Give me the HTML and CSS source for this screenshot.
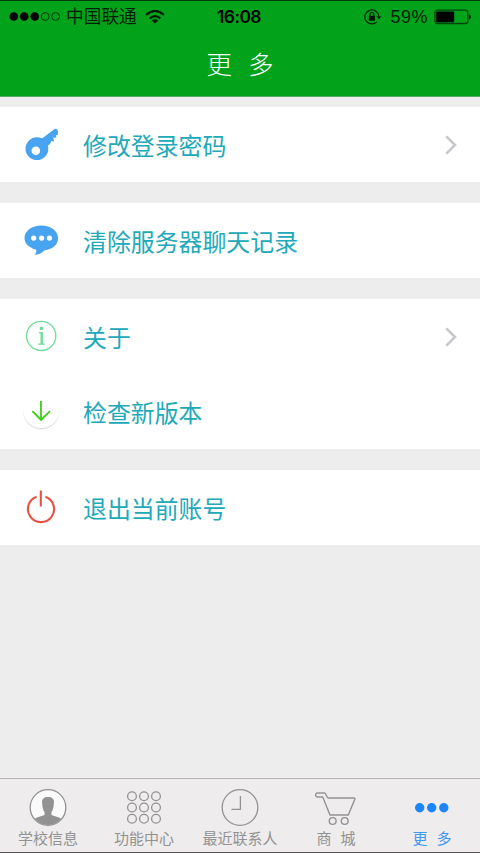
FILE: index.html
```html
<!DOCTYPE html>
<html lang="zh-CN">
<head>
<meta charset="utf-8">
<title>更多</title>
<link rel="stylesheet" href="styles.css">
</head>
<body>
<div class="screen">
  <header class="header">
    <div class="status">
      <div class="status-left">
        <svg class="signal" width="52" height="10" viewBox="0 0 52 10"><g fill="#000"><circle cx="4.8" cy="4.5" r="4.3"/><circle cx="15.2" cy="4.5" r="4.3"/><circle cx="25.7" cy="4.5" r="4.3"/></g><g fill="none" stroke="#003c06" stroke-width="1"><circle cx="36.2" cy="4.5" r="3.9"/><circle cx="46.6" cy="4.5" r="3.9"/></g></svg>
        <span class="carrier">中国联通</span>
        <svg class="wifi" width="20" height="14" viewBox="0 0 20 14"><g fill="none" stroke="#001a03" stroke-width="2.2"><path d="M1 4.9Q10 -3.1 19 4.9"/><path d="M4.7 8.3Q10 3.8 15.3 8.3"/></g><path d="M10 13.5L6.8 10.5Q10 8 13.2 10.5Z" fill="#001a03"/></svg>
      </div>
      <span class="time">16:08</span>
      <div class="status-right">
        <svg width="18" height="16" viewBox="0 0 18 16"><path d="M14.8 7.3A7 7 0 1 0 12.7 13" fill="none" stroke="#002b05" stroke-width="1.3"/><path d="M12.4 7.2H17.5L15 10.2Z" fill="#002b05"/><rect x="4.8" y="6.8" width="6.2" height="4.9" fill="#001503"/><path d="M6 7V5.4a1.9 1.9 0 0 1 3.8 0V7" fill="none" stroke="#001503" stroke-width="1.2"/></svg>
        <span class="percent">59%</span>
        <svg width="37" height="16" viewBox="0 0 37 16"><rect x=".9" y="1.1" width="33" height="13.4" rx="2.6" fill="none" stroke="#004508" stroke-width="1.3"/><rect x="2.2" y="2.4" width="18" height="10.8" rx="1" fill="#000"/><path d="M35 5.3Q37 5.8 37 7.9T35 10.5Z" fill="#002b05"/></svg>
      </div>
    </div>
    <h1 class="title">更<span class="gap"></span>多</h1>
  </header>

  <main class="content">
    <section class="group">
      <div class="row">
        <svg class="icon" viewBox="0.6 -0.7 40 40"><g fill="#48a4f0"><circle cx="16.5" cy="23" r="11.4"/><path d="M20 14L34.2 3.2Q37 2.5 37.6 5.5L37.5 9 35.7 9.5 35.8 12 33 11.8 33.6 16 30.8 15.4 29.6 18.5 25 21Z"/></g><circle cx="15.4" cy="25" r="4.3" fill="#fff"/></svg>
        <span class="label">修改登录密码</span>
        <svg class="chevron" viewBox="0 0 12 20"><path d="M1.3 1.3L10 10 1.3 18.7"/></svg>
      </div>
    </section>
    <section class="group">
      <div class="row">
        <svg class="icon" viewBox="0 0 40 40"><path d="M20.3 4.5C11 4.5 3.5 9.9 3.5 17C3.5 22.6 8 26.7 15.2 28.8C15.6 31 14.8 32.3 13.6 33.8C18 33.8 21.3 32 23.6 29.3C31.8 28.4 37.1 23.2 37.1 17C37.1 9.9 29.6 4.5 20.3 4.5Z" fill="#48a4f0"/><g fill="#fff"><circle cx="12.7" cy="17.1" r="2.6"/><circle cx="20.6" cy="17.1" r="2.6"/><circle cx="28.4" cy="17.1" r="2.6"/></g></svg>
        <span class="label">清除服务器聊天记录</span>
      </div>
    </section>
    <section class="group">
      <div class="row">
        <svg class="icon" viewBox="0 0 40 40"><circle cx="20.2" cy="18.9" r="14.6" fill="none" stroke="#6fdc9c" stroke-width="1.3"/><circle cx="20.4" cy="11.4" r="1.8" fill="#6fdc9c"/><path d="M17.8 15.6H20.7V27.1M17.3 27.1H24" fill="none" stroke="#6fdc9c" stroke-width="1.2"/><path d="M20.7 15.3V27" stroke="#6fdc9c" stroke-width="2.4"/></svg>
        <span class="label">关于</span>
        <svg class="chevron" viewBox="0 0 12 20"><path d="M1.3 1.3L10 10 1.3 18.7"/></svg>
      </div>
      <div class="row">
        <svg class="icon" viewBox="0 0 40 40"><defs><linearGradient id="rim" x2="0" y2="1"><stop offset=".3" stop-color="#fafafa"/><stop offset="1" stop-color="#dedede"/></linearGradient></defs><circle cx="20.3" cy="19" r="18.4" fill="url(#rim)"/><circle cx="20.3" cy="18" r="18" fill="#fff"/><path d="M20 9V28.5M11.4 19.2L20 28 29 19.2" fill="none" stroke="#39d010" stroke-width="1.8"/></svg>
        <span class="label">检查新版本</span>
      </div>
    </section>
    <section class="group">
      <div class="row">
        <svg class="icon" viewBox="0 -2.2 40 40"><path d="M15.6 6.5A13.1 13.1 0 1 0 24.4 6.5M19.8 0.2V16.2" fill="none" stroke="#e94f43" stroke-width="2.1"/></svg>
        <span class="label">退出当前账号</span>
      </div>
    </section>
  </main>

  <nav class="tabs">
    <div class="tab">
      <svg class="tab-icon" viewBox="0 0 42 40"><defs><clipPath id="face"><circle cx="21" cy="20.5" r="17.5"/></clipPath></defs><circle cx="21" cy="20.5" r="17.8" fill="#fafafa" stroke="#929292" stroke-width="1.3"/><g clip-path="url(#face)" fill="#929292"><path d="M15 15C15 12 17 10 21 10S27 12 27 15L26.5 20Q26 23 24.5 25V28C28 29.4 33 30 36 33V40H6V33C9 30 14 29.4 17.5 28V25Q16 23 15.5 20Z"/></g></svg>
      <span>学校信息</span>
    </div>
    <div class="tab">
      <svg class="tab-icon" viewBox="0 0 42 40"><g fill="none" stroke="#929292" stroke-width="1.3"><circle cx="9" cy="9.2" r="4.4"/><circle cx="21" cy="9.2" r="4.4"/><circle cx="33" cy="9.2" r="4.4"/><circle cx="9" cy="20.5" r="4.4"/><circle cx="21" cy="20.5" r="4.4"/><circle cx="33" cy="20.5" r="4.4"/><circle cx="9" cy="31.8" r="4.4"/><circle cx="21" cy="31.8" r="4.4"/><circle cx="33" cy="31.8" r="4.4"/></g></svg>
      <span>功能中心</span>
    </div>
    <div class="tab">
      <svg class="tab-icon" viewBox="0 0 42 40"><g fill="none" stroke="#929292" stroke-width="1.3"><circle cx="21" cy="20.5" r="17.8"/><path d="M21.4 9V22.3H12.5"/></g></svg>
      <span>最近联系人</span>
    </div>
    <div class="tab">
      <svg class="tab-icon" viewBox="0 0 42 40"><g fill="none" stroke="#929292" stroke-width="1.4" stroke-linejoin="round"><path d="M12.7 11H39Q40.2 11 39.8 12.2L33.3 28H15L7.7 10H2.6A1.9 1.9 0 0 1 2.6 6H9.3Q10.1 6 10.5 6.8L12.7 11"/><circle cx="17.7" cy="34" r="3.4"/><circle cx="29.7" cy="34" r="3.4"/></g></svg>
      <span>商<i class="tab-gap"></i>城</span>
    </div>
    <div class="tab active">
      <svg class="tab-icon" viewBox="0 0 42 40"><g fill="#1b86fb"><circle cx="8.7" cy="20.8" r="4.7"/><circle cx="20.7" cy="20.8" r="4.7"/><circle cx="32.8" cy="20.8" r="4.7"/></g></svg>
      <span>更<i class="tab-gap"></i>多</span>
    </div>
  </nav>
</div>
</body>
</html>
```

FILE: styles.css
```css
* {
  box-sizing: border-box;
}

body {
  margin: 0;
  font-family: "Liberation Sans", "Noto Sans CJK SC", sans-serif;
}

svg {
  display: block;
  flex: none;
}

.screen {
  display: flex;
  flex-direction: column;
  width: 480px;
  height: 853px;
  background: #ededed;
  overflow: hidden;
}

.header {
  height: 97px;
  background: #02a31a;
  border-top: 1px solid #043c0b;
  border-bottom: 1px solid #58a865;
}

.status {
  display: grid;
  grid-template-columns: 1fr auto 1fr;
  align-items: center;
  height: 31px;
  padding: 0 9px;
  color: #001f04;
}

.status-left,
.status-right {
  display: flex;
  align-items: center;
}

.status-right {
  justify-content: flex-end;
}

.carrier {
  margin: 0 8px 0 5px;
  font-size: 17.7px;
  line-height: 30px;
}

.time {
  margin-right: 2px;
  font-family: Inter, sans-serif;
  font-size: 17.5px;
  font-weight: 600;
  letter-spacing: -0.6px;
  color: #000;
}

.percent {
  margin: 1px 6px 0 8px;
  font-size: 18px;
  letter-spacing: 0.5px;
}

.title {
  display: flex;
  justify-content: center;
  margin: 14px 0 0;
  font-size: 25.5px;
  font-weight: 300;
  line-height: 38px;
  color: #fff;
}

.gap {
  width: 16px;
}

.content {
  display: flex;
  flex: 1;
  flex-direction: column;
  gap: 21px;
  padding-top: 10px;
}

.group {
  background: #fff;
}

.row {
  display: flex;
  align-items: center;
  height: 75px;
  padding: 0 23px 0 21px;
}

.icon {
  width: 40px;
  height: 40px;
}

.label {
  flex: 1;
  margin-left: 22px;
  padding-top: 4px;
  font-size: 23.9px;
  line-height: 36px;
  color: #22a9b9;
}

.chevron {
  width: 12px;
  height: 20px;
  fill: none;
  stroke: #c7c7cc;
  stroke-width: 2.6;
}

.tabs {
  display: grid;
  grid-template-columns: repeat(5, 1fr);
  height: 75px;
  padding-top: 8px;
  background: #eeecec;
  border-top: 1px solid #b5b4b4;
  border-bottom: 1px solid #555;
}

.tab {
  display: flex;
  flex-direction: column;
  align-items: center;
  font-size: 15px;
  line-height: 24px;
  color: #929292;
}

.tab-icon {
  width: 42px;
  height: 40px;
}

.tab span {
  display: flex;
}

.tab-gap {
  width: 9px;
}

.active {
  color: #4398ef;
}
```
